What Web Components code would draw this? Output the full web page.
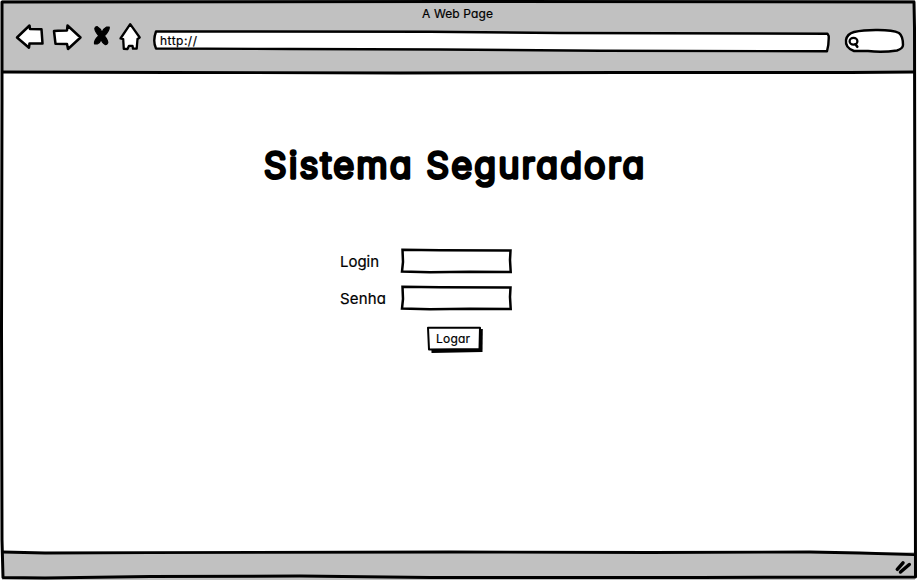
<!DOCTYPE html>
<html lang="pt-BR">
<head>
<meta charset="utf-8">
<title>Sistema Seguradora</title>
<style>
html,body{margin:0;height:100%;background:#fff;overflow:hidden}
body{font-family:Inter,"Liberation Sans",sans-serif;color:#000}
</style>
</head>
<body>
<sketch-window>
  <browser-bar slot="top"></browser-bar>
  <login-form></login-form>
  <status-bar slot="bottom"></status-bar>
</sketch-window>
<script>
const define=(name,html)=>customElements.define(name,class extends HTMLElement{
  constructor(){super();this.attachShadow({mode:'open'}).innerHTML=html;}
});
const ink='svg{display:block;overflow:visible;fill:none;stroke:#000;stroke-width:3;stroke-linecap:round;stroke-linejoin:round}';

/* Text fitted to a given width, with rounded stroke ends */
customElements.define('hand-text',class extends HTMLElement{
  connectedCallback(){
    const a=n=>this.getAttribute(n);
    const root=this.attachShadow({mode:'open'});
    root.innerHTML=`<style>:host{display:block;width:${a('w')}px;height:${a('h')}px}
      svg{display:block;overflow:visible}
      text{font-family:Inter,"Liberation Sans",sans-serif;font-size:${a('size')}px;font-weight:${a('weight')||400};font-feature-settings:"cv11" 1,"ss03" 1;word-spacing:${a('gap')||0}px;fill:#000;stroke:#000;stroke-width:${a('stroke')||0.2};stroke-linejoin:round}</style>
      <svg width="${a('w')}" height="${a('h')}"><text x="0" y="${a('base')}" textLength="${a('w')}"></text></svg>`;
    root.querySelector('text').textContent=a('text');
  }
});

define('sketch-window',`<style>
:host{display:grid;grid-template-rows:73px 1fr 28px;width:917px;height:580px;position:relative;box-sizing:border-box}
.edge{position:absolute;inset:0;pointer-events:none}${ink}
::slotted(*){min-height:0}
</style><slot name="top"></slot><slot></slot><slot name="bottom"></slot>
<svg class="edge" width="917" height="580">
<path d="M2 2L450 1.5L914 2L914.5 28L915 300L915.5 577L700 577.5L430 577.5L300 576L150 576.5L45 578L3 577.5L2 540L1.5 330L2 100Z"/>
<path stroke-width="2.8" d="M3 72L170 72.5L400 73L620 72.5L850 72.5L914 72"/>
<path stroke-width="2.8" d="M3 552L45 553L150 552.7L450 552L650 552.5L810 552L860 553L914 554.7"/>
</svg>`);

define('browser-bar',`<style>
:host{display:grid;grid-template-rows:24px 1fr;background:#c1c1c1;margin:0 2px 0 2px}
.title{display:flex;justify-content:center;padding:5px 2px 0 0}
.tools{display:flex;align-items:flex-start}
${ink}
.nav{flex:none;margin-left:13px}
address-field{margin-left:10px}search-pill{margin-left:13px}
</style>
<div class="title"><hand-text text="A Web Page" w="71" h="17" base="13" size="12"></hand-text></div>
<div class="tools">
<svg class="nav" width="128" height="30" viewBox="15 24 128 30">
<g fill="#fff" stroke-width="2.5">
<path d="M17 37.5L29.5 25.5L30 29L41.5 29.3L42.5 43.5L29.5 43.5L29 47.7Z"/>
<path d="M54 31L58 30.7L67 30.5L67.5 25.5L80.5 37.5L68 49L67 44L55.5 43.8Z"/>
<path stroke-width="2.3" d="M130.2 24.2L139.7 37.5L137.5 39L136.7 48.6L133 48.7L132.5 45.8L129 45.8L127.5 49L123.8 48.9L123.2 39.2L120.5 38.5Z"/>
</g>
<path fill="#000" stroke-width="1.2" d="M94.8 28.5Q95 26.8 97 26.6Q100.5 28.5 101.9 32.5Q103.5 28.5 106.6 27L109.3 27Q109.5 31 104.4 35.8Q107.8 40 107.8 42.7Q107 44.6 105.4 44.6Q102 43 101.2 39.4Q100 43 97.3 44L94.5 44Q93.8 40.5 98.8 35.8Q95 31.5 94.8 28.5Z"/>
</svg>
<address-field></address-field><search-pill></search-pill>
</div>`);

define('address-field',`<style>:host{display:block;flex:none;width:677px;height:24px;position:relative;margin-top:5px}
${ink} .bg{position:absolute;inset:0}
hand-text{position:relative;margin:3px 0 0 7px}</style>
<svg class="bg" width="677" height="24" viewBox="153 29 677 24"><path fill="#fff" stroke-width="2.4" d="M156 31.5L430 31.7L560 33L827.5 33.7L828.7 36Q829 44 827 51.2L600 50.8L440 49.5L290 49L156 48.5Q152.5 41 156 31.5Z"/></svg>
<hand-text text="http://" w="37" h="17" base="13" size="12"></hand-text>`);

define('search-pill',`<style>:host{display:block;flex:none;width:62px;height:27px;margin-top:4px}${ink}</style>
<svg width="62" height="27" viewBox="843 28 62 27"><path fill="#fff" stroke-width="2.4" d="M846 40Q847 34 854 32Q864 29.8 878 30Q893 30 899 33Q903 36 903 45Q903 48.5 897 50.5Q882 52.7 868 51L854 51Q845 48 846 40Z"/><ellipse cx="853.5" cy="41.3" rx="3.9" ry="3.4" stroke-width="2.3"/><path stroke-width="2.6" d="M855.5 44.3L857.3 46.8"/></svg>`);

define('status-bar',`<style>:host{display:flex;justify-content:flex-end;background:#c1c1c1;margin:0 2px;padding:8px 3px 0 0;box-sizing:border-box}${ink}</style>
<svg width="17" height="16" viewBox="895 560 17 16"><path stroke-width="3.5" d="M897.3 569.3L903 562.8M900.5 572L909.3 564.5"/></svg>`);

define('login-form',`<style>
:host{display:flex;flex-direction:column;align-items:flex-start}
.heading{margin:67px 0 0 264px}
.fields{display:grid;grid-template-columns:60px 112px;row-gap:10px;margin:50px 0 0 340px}
.fields hand-text{margin-top:4px}
logar-button{margin:14px 0 0 426px}
</style>
<hand-text class="heading" text="Sistema Seguradora" w="380" h="58" base="38" size="35.5" weight="300" stroke="3.5"></hand-text>
<div class="fields">
<hand-text text="Login" w="39" h="20" base="15" size="15"></hand-text><sketch-input></sketch-input>
<hand-text text="Senha" w="46" h="20" base="15" size="15"></hand-text><sketch-input></sketch-input>
</div>
<logar-button></logar-button>`);

define('sketch-input',`<style>:host{display:block;width:112px;height:27px}${ink}</style>
<svg width="112" height="27" viewBox="400 248 112 27"><path fill="#fff" stroke-width="2.5" stroke-linejoin="miter" d="M402.5 249.8L440 250.3L510.5 250.5L510 260L510.7 272L470 271.7L430 272.3L402 271.5L403 262Z"/></svg>`);

define('logar-button',`<style>:host{display:block;width:57px;height:27px;position:relative}${ink} .bg{position:absolute;inset:0}
hand-text{position:relative;left:0;margin-left:10px;padding-top:4px}</style>
<svg class="bg" width="57" height="27" viewBox="426 326 57 27"><path fill="#000" stroke="none" d="M431 331L482.8 329L482.5 352L431.5 353Z"/><path fill="#fff" stroke-width="2" d="M428 327.7L480 327.7L479.5 349L429 349.5Z"/></svg>
<hand-text text="Logar" w="34" h="18" base="13" size="12"></hand-text>`);
</script>
</body>
</html>
